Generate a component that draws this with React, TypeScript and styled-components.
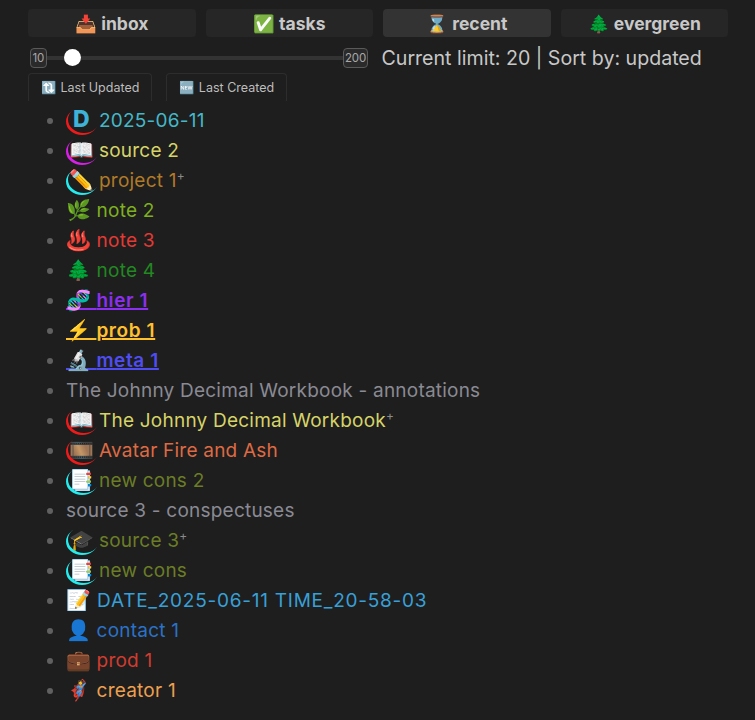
import React from "react";
import styled, { createGlobalStyle } from "styled-components";

const Global = createGlobalStyle`
  html, body { margin: 0; background: #1e1e1e; }
  body { font-family: Inter, "Noto Sans", sans-serif; width: 755px; height: 720px; overflow: hidden; }
`;
const Page = styled.div`
  padding: 9px 27px 0 28px;
  display: flex;
  flex-direction: column;
`;
const Tabs = styled.div`
  display: grid;
  grid-template-columns: repeat(4, 1fr);
  gap: 10px;
`;
const Tab = styled.button<{ $active?: boolean }>`
  height: 28px;
  border: 0;
  padding: 0;
  border-radius: 4px;
  background: ${(p) => (p.$active ? "#333333" : "#262626")};
  color: #c8c8c8;
  font: 700 17.5px Inter, sans-serif;
`;
const SliderRow = styled.div`
  display: flex;
  align-items: center;
  margin: 7px 0 0 2px;
  height: 28px;
`;
const Bound = styled.span`
  box-sizing: border-box;
  height: 20px;
  padding: 0 1.5px;
  border: 1px solid #5a5a5a;
  border-radius: 4px;
  background: #2a2a2a;
  color: #a8a8a8;
  font: 11.5px/18px Inter, sans-serif;
  letter-spacing: -0.2px;
`;
const Track = styled.div`
  position: relative;
  width: 296px;
  height: 4px;
  background: #333333;
`;
const Thumb = styled.span`
  position: absolute;
  left: 17px;
  top: -7px;
  width: 17px;
  height: 17px;
  border-radius: 50%;
  background: #fff;
`;
const Limit = styled.span`
  margin-left: 13px;
  color: #c8c8c8;
  font-size: 19.6px;
`;
const SortRow = styled.div`
  display: flex;
  gap: 14px;
  margin-top: 1px;
`;
const SortButton = styled.button`
  height: 28px;
  padding: 0 12px;
  border: 1px solid #2d2d2d;
  border-bottom: 0;
  border-radius: 4px 4px 0 0;
  background: transparent;
  color: #bdbdbd;
  font: 12.5px Inter, sans-serif;
`;
const List = styled.ul`
  margin: 4px 0 0;
  padding: 0 0 0 38px;
  list-style: disc;
  font-size: 19px;
  letter-spacing: 0.22px;
  line-height: 30px;
  & li::marker { color: #606060; }
`;
const Item = styled.li<{ $color: string; $strong?: boolean; $plain?: boolean; $tracking?: number }>`
  box-sizing: border-box;
  color: ${(p) => p.$color};
  white-space: nowrap;
  height: 30px;
  padding-top: ${(p) => (p.$plain ? "1px" : "0")};
  font-weight: ${(p) => (p.$strong ? 600 : 400)};
  letter-spacing: ${(p) => (p.$tracking ? `${p.$tracking}px` : "inherit")};
  text-decoration: ${(p) => (p.$strong ? "underline 2px" : "none")};
`;
const PlainIcon = styled.span`
  font-size: 20px;
  letter-spacing: 0;
`;
const RingIcon = styled.span<{ $ring: string }>`
  position: relative;
  display: inline-block;
  box-sizing: border-box;
  width: 33px;
  padding-left: 3px;
  font-size: 20px;
  letter-spacing: 0;
  &::before {
    content: "";
    position: absolute;
    left: 0;
    top: 3px;
    width: 32px;
    height: 27px;
    border-radius: 50%;
    box-shadow: inset 2px -2px 0 ${(p) => p.$ring};
  }
`;
const Letter = styled.span`
  position: relative;
  margin-left: 4px;
  color: #3fb2d8;
  font-weight: 800;
  font-size: 23px;
  line-height: 0;
`;
const Plus = styled.sup`
  color: #8a8a8a;
  font-size: 12px;
  line-height: 0;
`;

type Row = { icon?: string; ring?: string; text: string; color: string; strong?: boolean; plus?: boolean; tracking?: number };
const rows: Row[] = [
  { icon: "D", ring: "#f01a1a", text: "2025-06-11", color: "#45b8c8" },
  { icon: "📖", ring: "#d81ee8", text: "source 2", color: "#d6d468" },
  { icon: "✏️", ring: "#22eef0", text: "project 1", color: "#b07a28", plus: true },
  { icon: "🌿", text: "note 2", color: "#7fb020" },
  { icon: "♨️", text: "note 3", color: "#e23a34" },
  { icon: "🌲", text: "note 4", color: "#228822" },
  { icon: "🧬", text: "hier 1", color: "#8b2ff0", strong: true, tracking: 0.6 },
  { icon: "⚡", text: "prob 1", color: "#ffc02e", strong: true, tracking: 0.6 },
  { icon: "🔬", text: "meta 1", color: "#4f4df0", strong: true, tracking: 0.6 },
  { text: "The Johnny Decimal Workbook - annotations", color: "#8a8a94" },
  { icon: "📖", ring: "#f01a1a", text: "The Johnny Decimal Workbook", color: "#d6d468", plus: true },
  { icon: "🎞️", ring: "#f01a1a", text: "Avatar Fire and Ash", color: "#de6a44" },
  { icon: "📑", ring: "#22eef0", text: "new cons 2", color: "#6b7d26" },
  { text: "source 3 - conspectuses", color: "#8a8a94" },
  { icon: "🎓", ring: "#22eef0", text: "source 3", color: "#6b7d26", plus: true },
  { icon: "📑", ring: "#22eef0", text: "new cons", color: "#6b7d26" },
  { icon: "📝", text: "DATE_2025-06-11 TIME_20-58-03", color: "#38a0d8", tracking: 0.75 },
  { icon: "👤", text: "contact 1", color: "#2a72c8" },
  { icon: "💼", text: "prod 1", color: "#d03c2f" },
  { icon: "🦸", text: "creator 1", color: "#eda050" },
];

export default function App() {
  return (
    <>
      <Global />
      <Page>
        <Tabs>
          <Tab>📥 inbox</Tab>
          <Tab>✅ tasks</Tab>
          <Tab $active>⌛ recent</Tab>
          <Tab>🌲 evergreen</Tab>
        </Tabs>
        <SliderRow>
          <Bound>10</Bound>
          <Track><Thumb /></Track>
          <Bound>200</Bound>
          <Limit>Current limit: 20 | Sort by: updated</Limit>
        </SliderRow>
        <SortRow>
          <SortButton>🔃 Last Updated</SortButton>
          <SortButton>🆕 Last Created</SortButton>
        </SortRow>
        <List>
          {rows.map((r, i) => (
            <Item key={i} $color={r.color} $strong={r.strong} $plain={!r.icon} $tracking={r.tracking}>
              {r.icon && r.ring && (
                <RingIcon $ring={r.ring}>
                  {r.icon === "D" ? <Letter>D</Letter> : r.icon}
                </RingIcon>
              )}
              {r.icon && !r.ring && <><PlainIcon>{r.icon}</PlainIcon>{" "}</>}
              {r.text}
              {r.plus && <Plus>+</Plus>}
            </Item>
          ))}
        </List>
      </Page>
    </>
  );
}
